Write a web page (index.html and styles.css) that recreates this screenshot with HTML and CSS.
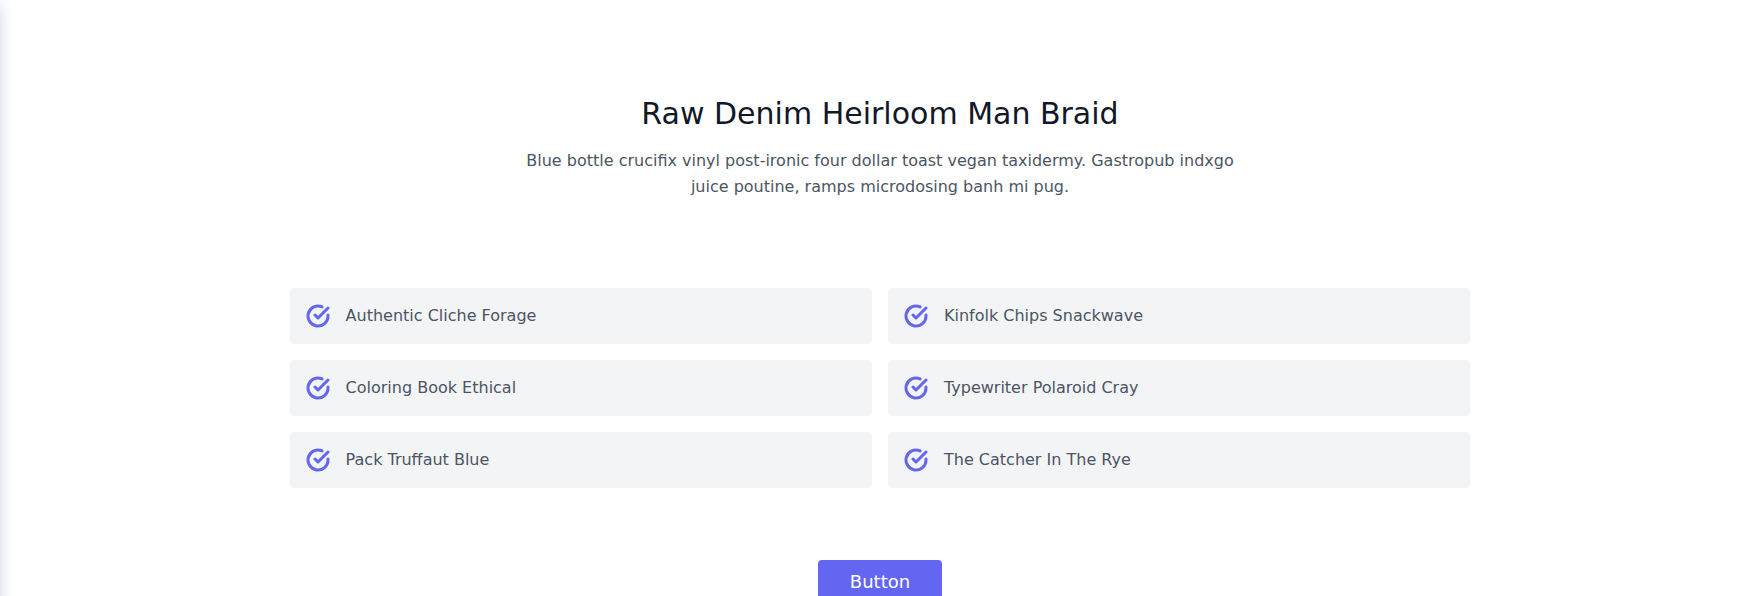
FILE: index.html
```html
<!DOCTYPE html>
<html lang="en">
<head>
<meta charset="utf-8">
<title>Raw Denim Heirloom Man Braid</title>
<link rel="stylesheet" href="styles.css">
</head>
<body>
<svg class="defs" aria-hidden="true"><symbol id="check" viewBox="0 0 24 24"><path d="M22 11.08V12a10 10 0 11-5.93-9.14"/><path d="M22 4L12 14.01l-3-3"/></symbol></svg>
<div class="edge"></div>
<section class="container">
  <header class="intro">
    <h1 class="title">Raw Denim Heirloom Man Braid</h1>
    <p class="lead">Blue bottle crucifix vinyl post-ironic four dollar toast vegan taxidermy. Gastropub indxgo juice poutine, ramps microdosing banh mi pug.</p>
  </header>
  <div class="features">
    <div class="feature"><svg class="icon"><use href="#check"/></svg><span>Authentic Cliche Forage</span></div>
    <div class="feature"><svg class="icon"><use href="#check"/></svg><span>Kinfolk Chips Snackwave</span></div>
    <div class="feature"><svg class="icon"><use href="#check"/></svg><span>Coloring Book Ethical</span></div>
    <div class="feature"><svg class="icon"><use href="#check"/></svg><span>Typewriter Polaroid Cray</span></div>
    <div class="feature"><svg class="icon"><use href="#check"/></svg><span>Pack Truffaut Blue</span></div>
    <div class="feature"><svg class="icon"><use href="#check"/></svg><span>The Catcher In The Rye</span></div>
  </div>
  <button class="button">Button</button>
</section>
</body>
</html>
```
FILE: styles.css
```css
* { box-sizing: border-box; }
body {
  margin: 0;
  height: 596px;
  overflow: hidden;
  background: #fff;
  color: #4b5563;
  font: 16px/24px "DejaVu Sans", sans-serif;
}
.defs { position: absolute; width: 0; height: 0; }
.edge {
  position: absolute;
  top: 0;
  left: -40px;
  width: 40px;
  height: 640px;
  box-shadow: 0 5px 15px rgba(50, 90, 160, .24);
}
.container { width: 1536px; margin: 0 auto; padding: 96px 20px; }
.intro { margin-bottom: 88px; text-align: center; }
.title { margin: 0 0 16px; color: #111827; font-size: 30px; line-height: 36px; font-weight: 400; }
.lead { width: 748px; margin: 0 auto; line-height: 26px; }
.features {
  display: grid;
  grid-template-columns: 1fr 1fr;
  gap: 16px;
  width: 1180.8px;
  margin: 0 auto;
}
.feature {
  display: flex;
  align-items: center;
  height: 56px;
  padding: 16px;
  border-radius: 4px;
  background: #f3f4f6;
  font-weight: 500;
}
.icon {
  width: 24px;
  height: 24px;
  margin-right: 16px;
  fill: none;
  stroke: #6366f1;
  stroke-width: 3;
  stroke-linecap: round;
  stroke-linejoin: round;
}
.button {
  display: block;
  margin: 72px auto 0;
  padding: 8px 32px;
  border: 0;
  border-radius: 4px;
  background: #6366f1;
  color: #fff;
  font: 18px/28px "DejaVu Sans", sans-serif;
}
```
